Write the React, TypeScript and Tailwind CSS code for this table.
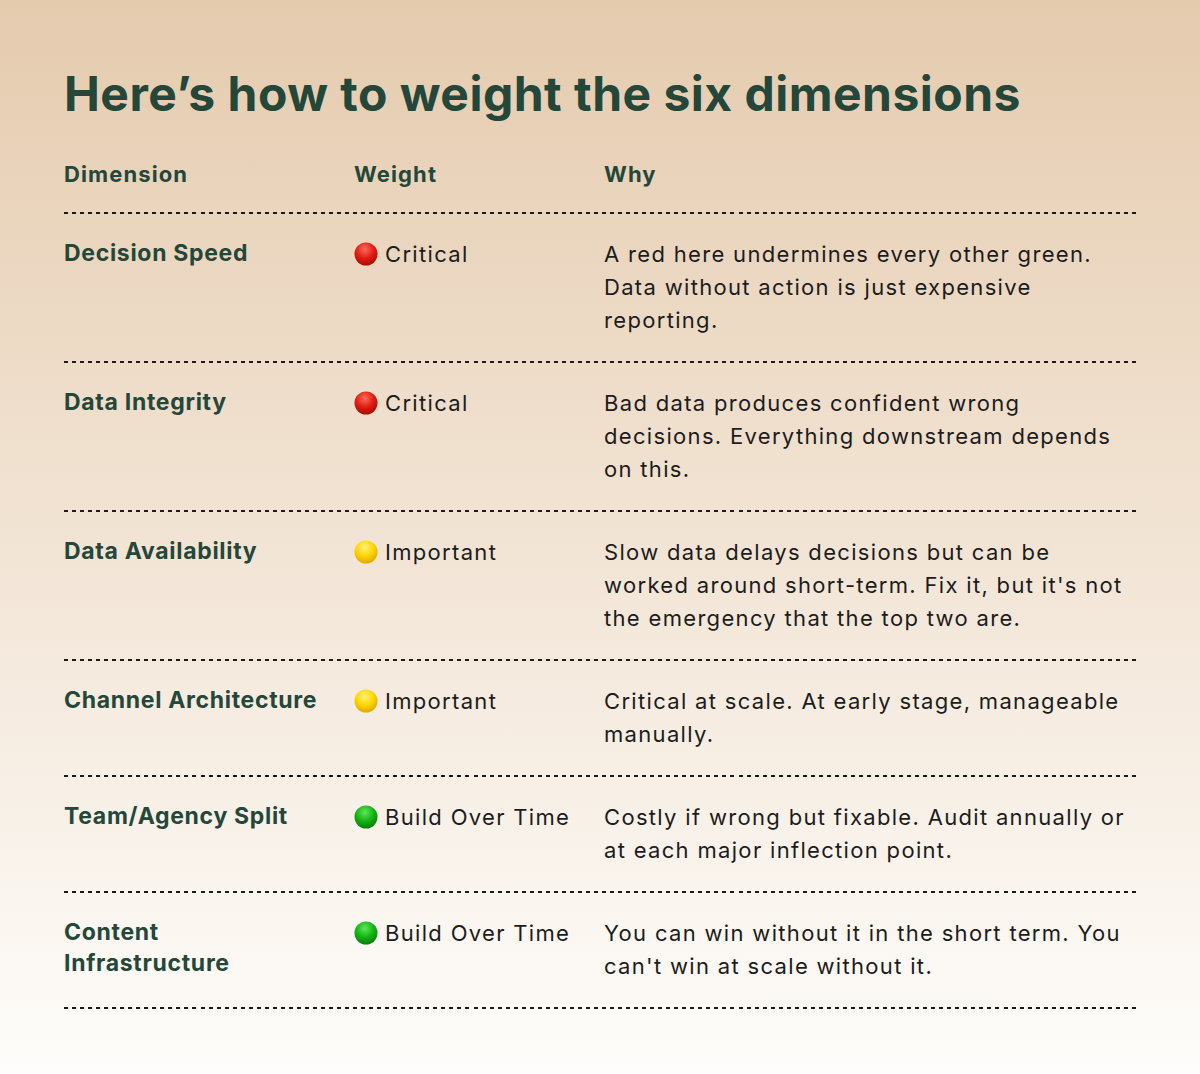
import React from "react";

type Level = "red" | "yellow" | "green";

type Row = {
  dimension: string;
  level: Level;
  weight: string;
  why: string;
};

const rows: Row[] = [
  {
    dimension: "Decision Speed",
    level: "red",
    weight: "Critical",
    why: "A red here undermines every other green. Data without action is just expensive reporting.",
  },
  {
    dimension: "Data Integrity",
    level: "red",
    weight: "Critical",
    why: "Bad data produces confident wrong decisions. Everything downstream depends on this.",
  },
  {
    dimension: "Data Availability",
    level: "yellow",
    weight: "Important",
    why: "Slow data delays decisions but can be worked around short-term. Fix it, but it's not the emergency that the top two are.",
  },
  {
    dimension: "Channel Architecture",
    level: "yellow",
    weight: "Important",
    why: "Critical at scale. At early stage, manageable manually.",
  },
  {
    dimension: "Team/Agency Split",
    level: "green",
    weight: "Build Over Time",
    why: "Costly if wrong but fixable. Audit annually or at each major inflection point.",
  },
  {
    dimension: "Content Infrastructure",
    level: "green",
    weight: "Build Over Time",
    why: "You can win without it in the short term. You can't win at scale without it.",
  },
];

const dotColors: Record<Level, { light: string; mid: string; dark: string }> = {
  red: { light: "#ff6b5e", mid: "#e11d12", dark: "#a80c06" },
  yellow: { light: "#fff27a", mid: "#fdd500", dark: "#e0a800" },
  green: { light: "#5ee85a", mid: "#14b414", dark: "#0a7d0a" },
};

function Dot({ level }: { level: Level }) {
  const c = dotColors[level];
  const id = `dot-${level}`;
  return (
    <svg width="24" height="24" viewBox="0 0 24 24" className="shrink-0">
      <defs>
        <radialGradient id={id} cx="45%" cy="30%" r="70%">
          <stop offset="0%" stopColor={c.light} />
          <stop offset="55%" stopColor={c.mid} />
          <stop offset="100%" stopColor={c.dark} />
        </radialGradient>
      </defs>
      <circle cx="12" cy="12" r="11.5" fill={`url(#${id})`} />
    </svg>
  );
}

function Dashed() {
  return (
    <div className="h-[2px] w-full bg-[repeating-linear-gradient(to_right,#1b1b1b_0px,#1b1b1b_4px,transparent_4px,transparent_8.03px)]" />
  );
}

export default function App() {
  return (
    <div
      className="min-h-[1074px] w-full bg-gradient-to-b from-[#e5cbae] to-[#fefdfb] px-16 pt-[62px] pb-16 text-[#1c1c1c]"
      style={{ fontFamily: "Inter, 'Noto Sans', sans-serif" }}
    >
      <h1 className="text-[48px] font-bold leading-[64px] tracking-[0.01em] text-[#24473a]">
        Here’s how to weight the six dimensions
      </h1>

      <div className="mt-[32px]">
        <div className="grid grid-cols-[290px_250px_1fr] pb-[22px] text-[22px] font-bold leading-[32px] tracking-[0.05em] text-[#24473a]">
          <div>Dimension</div>
          <div>Weight</div>
          <div>Why</div>
        </div>
        <Dashed />

        {rows.map((r) => (
          <div key={r.dimension}>
            <div className="grid grid-cols-[290px_250px_1fr] pt-[24px] pb-[24px]">
              <div className="max-w-[258px] text-[23px] font-bold leading-[31px] tracking-[0.03em] text-[#24473a]">
                {r.dimension}
              </div>
              <div className="flex items-start gap-[7px] text-[22px] leading-[33px] tracking-[0.06em]">
                <span className="mt-[4px]">
                  <Dot level={r.level} />
                </span>
                <span>{r.weight}</span>
              </div>
              <div className="text-[22px] leading-[33px] tracking-[0.06em]">{r.why}</div>
            </div>
            <Dashed />
          </div>
        ))}
      </div>
    </div>
  );
}
